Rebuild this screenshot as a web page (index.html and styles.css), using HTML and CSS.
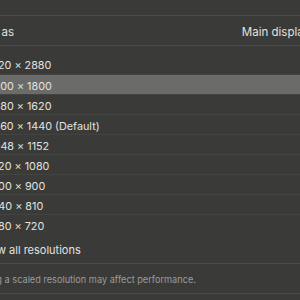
FILE: index.html
```html
<!DOCTYPE html>
<html>
<head>
<meta charset="utf-8">
<link rel="stylesheet" href="styles.css">
</head>
<body>
<div class="pane">
  <div class="topbar"></div>
  <div class="header">
    <span class="label">Use as</span>
    <span class="value">Main display</span>
  </div>
  <ul class="list">
    <li class="row">5120 × 2880</li>
    <li class="row selected">3200 × 1800</li>
    <li class="row">2880 × 1620</li>
    <li class="row">2560 × 1440 (Default)</li>
    <li class="row">2048 × 1152</li>
    <li class="row">1920 × 1080</li>
    <li class="row">1600 × 900</li>
    <li class="row">1440 × 810</li>
    <li class="row">1280 × 720</li>
  </ul>
  <div class="showall">Show all resolutions</div>
  <div class="footer">Using a scaled resolution may affect performance.</div>
</div>
</body>
</html>
```
FILE: styles.css
```css
html, body {
  margin: 0;
  padding: 0;
}
body {
  width: 300px;
  height: 300px;
  overflow: hidden;
  background: #3a3a38;
  color: #e2e2e0;
  font-family: Inter, "Liberation Sans", sans-serif;
  font-size: 11px;
}
.pane {
  margin-left: -23px;
  width: 360px;
}
.topbar {
  height: 15px;
  border-bottom: 1px solid #4a4a48;
}
.header {
  height: 30px;
  padding-top: 2px;
  box-sizing: border-box;
  display: flex;
  align-items: center;
  border-bottom: 1px solid #4a4a48;
  font-size: 11.5px;
}
.label {
  flex: 1;
}
.value {
  margin-right: 27px;
}
.list {
  list-style: none;
  margin: 0;
  padding: 8px 0 0 0;
}
.row {
  height: 20px;
  line-height: 23px;
  padding-left: 10px;
  box-sizing: border-box;
  font-size: 10.8px;
}
.row + .row {
  border-top: 1px solid #434341;
}
.row.selected {
  background: #6b6b69;
}
.showall {
  height: 30px;
  padding-top: 2px;
  box-sizing: border-box;
  display: flex;
  align-items: center;
  border-bottom: 1px solid #4a4a48;
  font-size: 11px;
}
.footer {
  height: 30px;
  padding-top: 2px;
  box-sizing: border-box;
  display: flex;
  align-items: center;
  color: #9c9c9a;
  font-size: 9.2px;
  border-bottom: 1px solid #4a4a48;
}
```
